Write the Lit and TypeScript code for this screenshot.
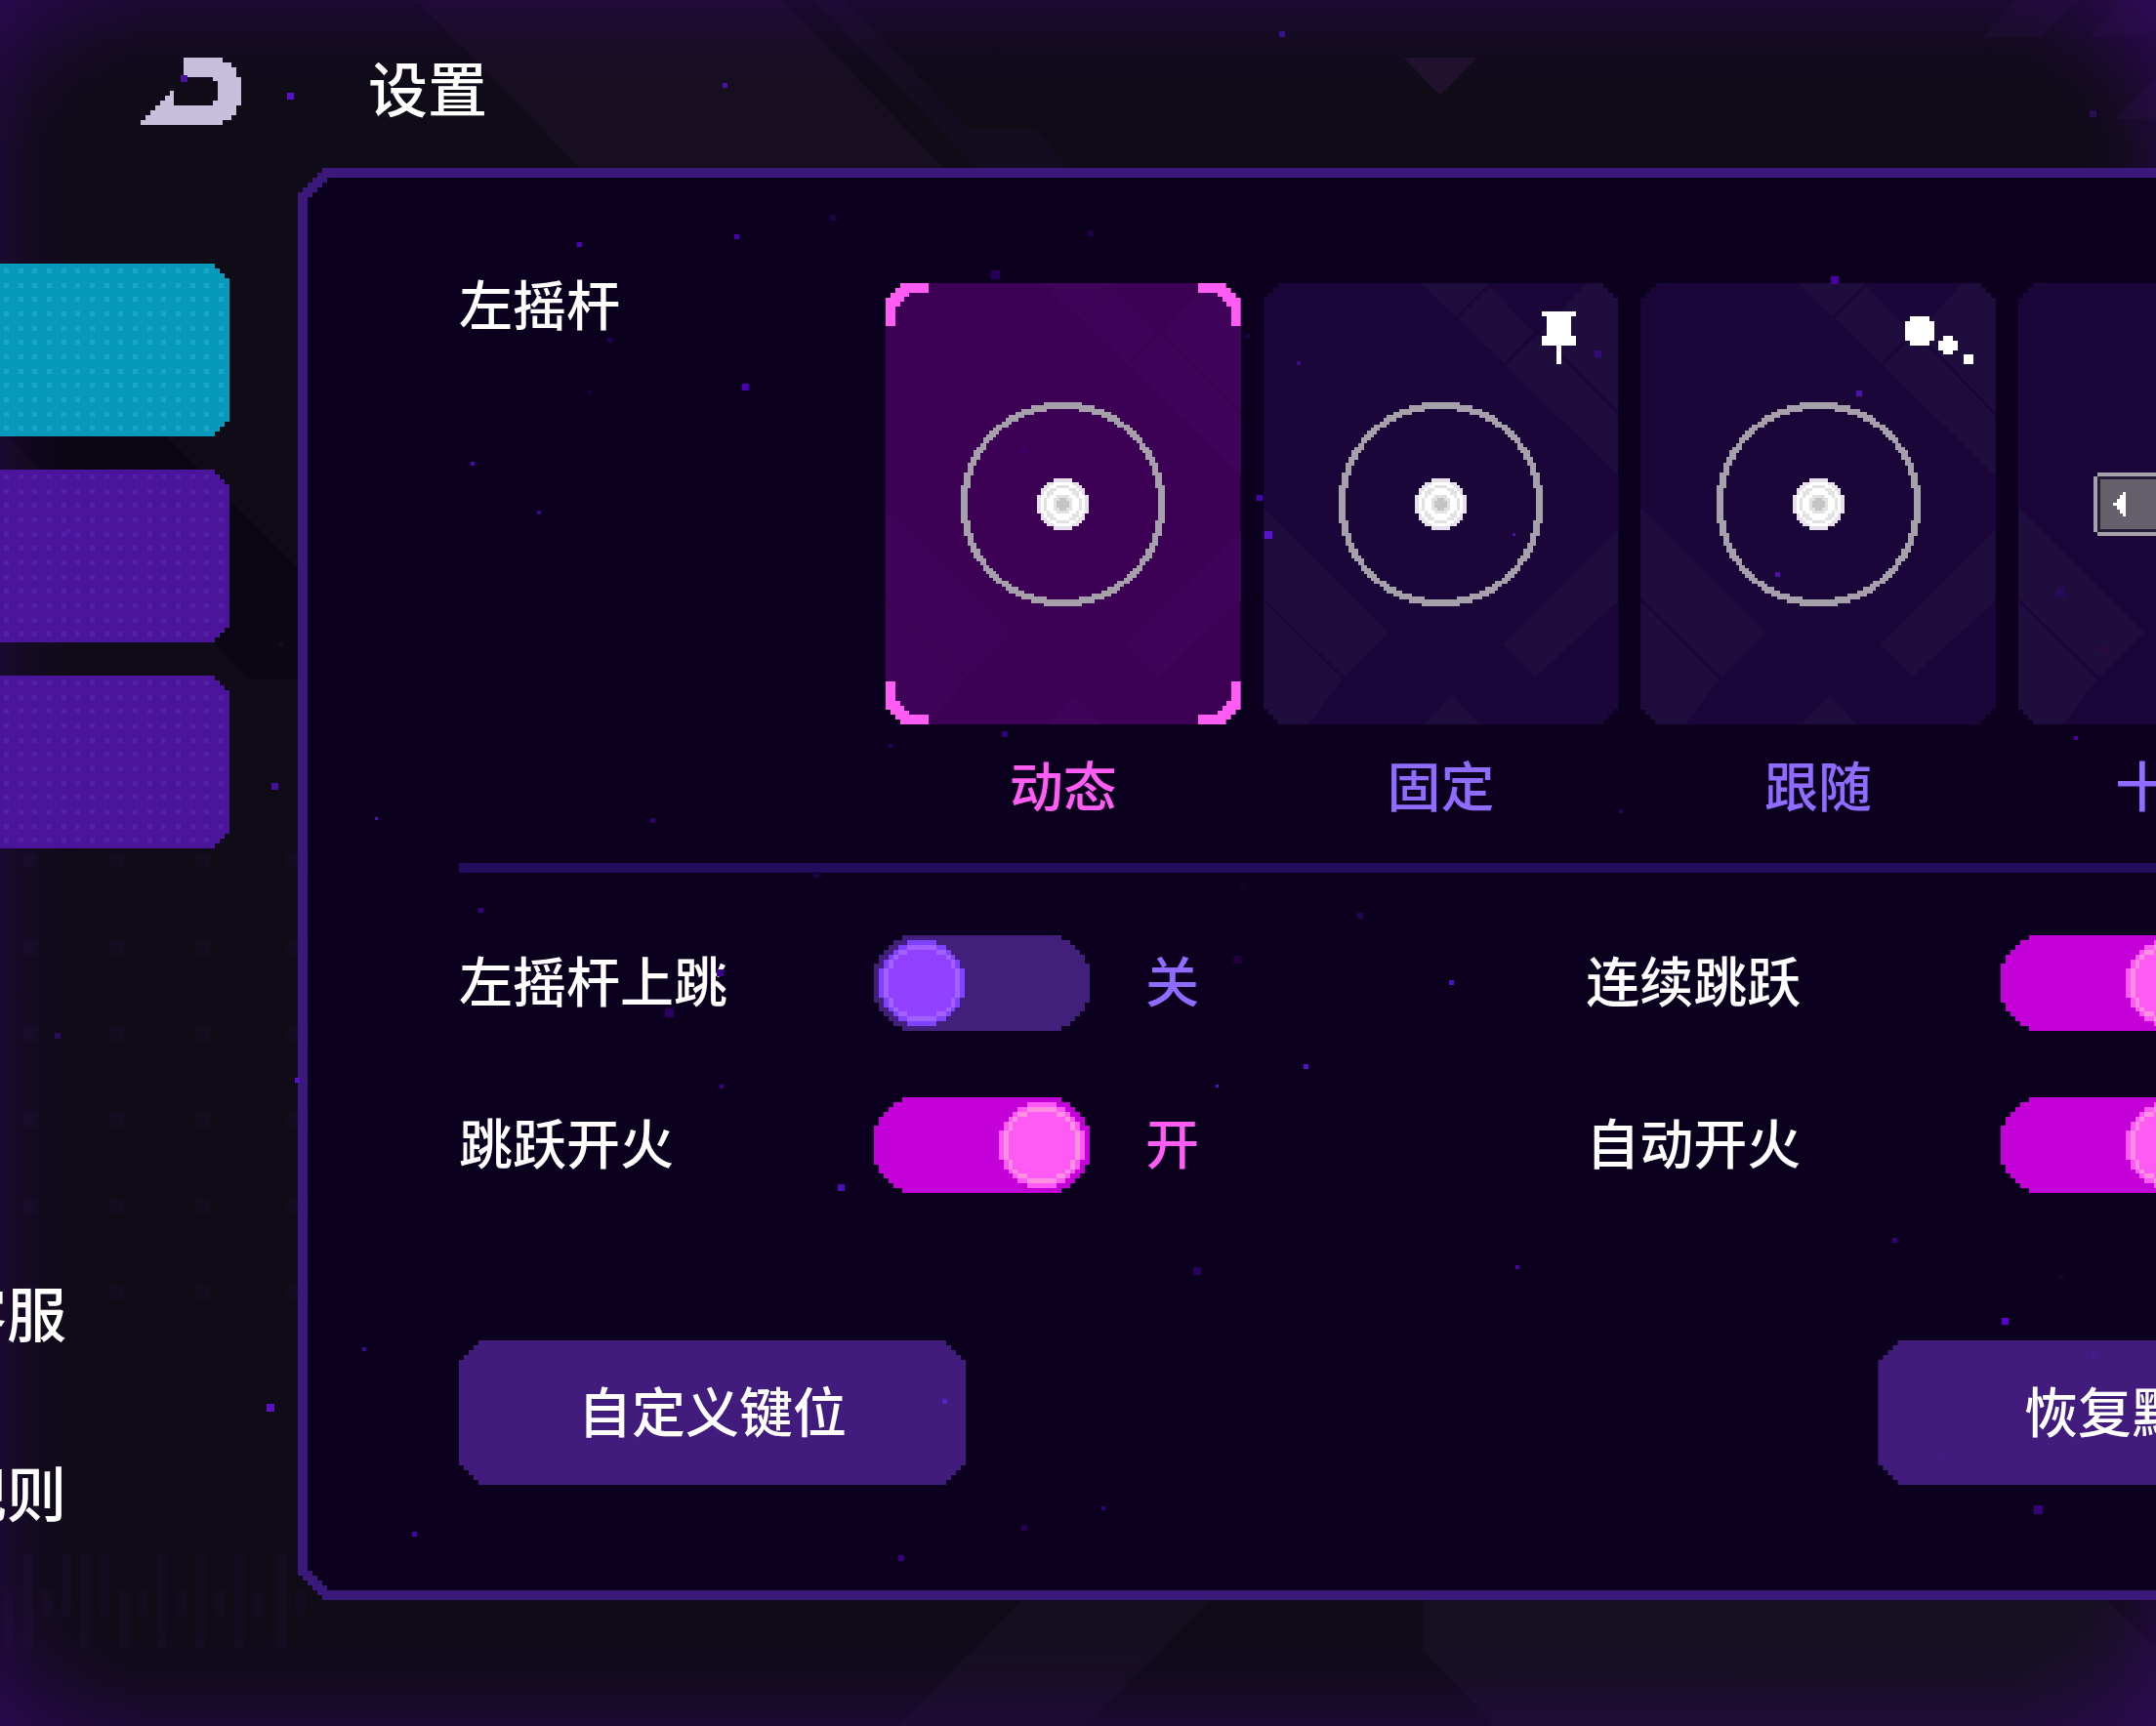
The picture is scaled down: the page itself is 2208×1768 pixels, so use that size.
import { LitElement, html, css, svg, unsafeCSS } from "lit";
import { customElement, property, state } from "lit/decorators.js";

/** Polygon with corners cut in 5px stairs. `left` keeps the left corners cut too. */
function stairs(steps: number, left = true): string {
  const s = 5;
  const c = steps * s;
  const pts: string[] = [];
  const at = (x: number, y: number, right: boolean, bottom: boolean) =>
    pts.push(`${right ? `calc(100% - ${x}px)` : `${x}px`} ${bottom ? `calc(100% - ${y}px)` : `${y}px`}`);
  const corner = (right: boolean, bottom: boolean, fromSide: boolean) => {
    const list: [number, number][] = [[0, c]];
    for (let i = 1; i <= steps; i++) {
      list.push([i * s, c - (i - 1) * s]);
      list.push([i * s, c - i * s]);
    }
    if (!fromSide) list.reverse();
    list.forEach(([x, y]) => at(x, y, right, bottom));
  };
  if (left) corner(false, false, true);
  else at(0, 0, false, false);
  corner(true, false, false);
  corner(true, true, true);
  if (left) corner(false, true, false);
  else at(0, 0, false, true);
  return `polygon(${pts.join(",")})`;
}

/** Path of a symmetric shape described by its left inset on every row. */
function rows(width: number, insets: number[], ox = 0, oy = 0): string {
  return insets.map((v, i) => `M${ox + v} ${oy + i}h${width - 2 * v}v1h${-(width - 2 * v)}z`).join("");
}

/** Path of all cells of an n×n grid whose distance from the centre is in (a, b]. */
function band(n: number, a: number, b: number): string {
  let d = "";
  for (let y = 0; y < n; y++) {
    let start = -1;
    for (let x = 0; x <= n; x++) {
      const r = Math.hypot(x + 0.5 - n / 2, y + 0.5 - n / 2);
      const hit = x < n && r > a && r <= b;
      if (hit && start < 0) start = x;
      if (!hit && start >= 0) {
        d += `M${start} ${y}h${x - start}v1h${start - x}z`;
        start = -1;
      }
    }
  }
  return d;
}

const mirror = (half: number[]) => [...half, ...[...half].reverse()];
const TRACK = rows(45, mirror([6, 4, 3, 2, 1, 1, 0, 0, 0, 0]));
const KNOB = rows(18, mirror([6, 4, 3, 2, 1, 1, 0, 0, 0]));
const KNOB_RING = rows(18, mirror([6, 4, 3, 2, 2, 1, 1, 1]), 0, 1);
const KNOB_CORE = rows(18, mirror([6, 4, 3, 3, 2, 2, 2]), 0, 2);

const STICK_RING = band(64, 30, 32.1);
const NUB = band(16, -1, 8.1);
const NUB_EDGE = band(16, 7.1, 8.1);
const NUB_RING = band(16, 4.9, 5.8);
const NUB_SOFT = band(16, 2, 3);
const NUB_CORE = band(16, -1, 2);

@customElement("pixel-switch")
export class PixelSwitch extends LitElement {
  @property() label = "";
  @property({ type: Boolean }) on = false;

  static styles = css`
    :host { display: flex; align-items: center; height: 98px; }
    .name { width: 425px; flex: none; padding-bottom: 10px; color: #fff; }
    .control { display: grid; flex: none; width: 221px; height: 98px; }
    .control > * { grid-area: 1 / 1; width: 100%; height: 100%; margin: 0; }
    .box { opacity: 0; cursor: pointer; }
    .value { margin-left: 57px; padding-bottom: 10px; color: #8f6bff; white-space: nowrap; }
    .value.on { color: #ff5cf4; }
    .track { fill: #411f7b; }
    .knob { fill: #7f43ff; }
    .ring { fill: #a261ff; }
    .core { fill: #9140ff; }
    .on .track { fill: #c400d9; }
    .on .knob { fill: #ff5af5; }
    .on .ring { fill: #ff8fe0; }
    .on .core { fill: #ff5af3; }
  `;

  render() {
    return html`
      <label class="name" for="box">${this.label}</label>
      <span class="control">
        <svg class=${this.on ? "on" : ""} viewBox="0 0 45 20" preserveAspectRatio="none" shape-rendering="crispEdges" aria-hidden="true">
          <path class="track" d=${TRACK} />
          <g transform=${`translate(${this.on ? 26 : 1} 1)`}>
            <path class="knob" d=${KNOB} />
            <path class="ring" d=${KNOB_RING} />
            <path class="core" d=${KNOB_CORE} />
          </g>
        </svg>
        <input id="box" class="box" type="checkbox" role="switch" .checked=${this.on}
          @change=${(e: Event) => { this.on = (e.target as HTMLInputElement).checked; }} />
      </span>
      <span class="value ${this.on ? "on" : ""}">${this.on ? "开" : "关"}</span>
    `;
  }
}

type Mode = { id: string; name: string };
const MODES: Mode[] = [
  { id: "dynamic", name: "动态" },
  { id: "fixed", name: "固定" },
  { id: "follow", name: "跟随" },
  { id: "cross", name: "十字键" },
];

@customElement("stick-modes")
export class StickModes extends LitElement {
  @state() private selected = "dynamic";

  static styles = css`
    :host { display: grid; grid-template-columns: repeat(4, minmax(0, 1fr)); column-gap: 23px; }
    .mode { position: relative; display: flex; flex-direction: column; gap: 36px; padding-bottom: 4px; cursor: pointer; text-align: center; color: #8f6bff; }
    .mode.active { color: #ff5cf4; }
    .pick { position: absolute; inset: 0; margin: 0; opacity: 0; }
    .card { display: grid; height: 452px; background: #1a0638; clip-path: ${unsafeCSS(stairs(3))}; }
    .card > * { grid-area: 1 / 1; }
    .active .card { background: #3c0055; }
    .pattern { width: 100%; height: 100%; fill: #1f0d3e; }
    .active .pattern { fill: #40035a; }
    .stick { width: 209px; height: 209px; place-self: center; }
    .badge { width: 70px; height: 54px; place-self: start end; margin: 29px 23px 0 0; fill: #fff; }
    .corner { width: 44px; height: 44px; fill: #ff5cf4; }
    .tl { place-self: start start; }
    .tr { place-self: start end; transform: scaleX(-1); }
    .bl { place-self: end start; transform: scaleY(-1); }
    .br { place-self: end end; transform: scale(-1); }
    .name { white-space: nowrap; }
  `;

  private art(id: string) {
    if (id === "cross") {
      return svg`
        <path fill="#a5a0a9" d="M76 0h57v4h4v68h68v4h4v57h-4v4h-68v68h-4v4h-57v-4h-4v-68h-68v-4h-4v-57h4v-4h68v-68h4z" />
        <path fill="#251c37" d="M76 4h57v72h72v57h-72v72h-57v-72h-72v-57h72z" />
        <path fill="#65606c" d="M79 7h51v72h72v51h-72v72h-51v-72h-72v-51h72z" />
        <path fill="#fff" d="M33 92v25h-3v-3h-3v-4h-3v-4h-4v-3h4v-4h3v-4h3v-3z M176 92v25h3v-3h3v-4h3v-4h4v-3h-4v-4h-3v-4h-3v-3z M92 33h25v-3h-3v-3h-4v-3h-4v-4h-3v4h-4v3h-4v3h-3z M92 176h25v3h-3v3h-4v3h-4v4h-3v-4h-4v-3h-4v-3h-3z" />`;
    }
    return svg`
      <g transform="scale(3.266)">
        <path fill="#a5a0a9" d=${STICK_RING} />
        <g transform="translate(24 24)">
          <path fill="#fff" d=${NUB} />
          <path fill="#e6e0ea" d=${NUB_EDGE} />
          <path fill="#e2e2e2" d=${NUB_RING} />
          <path fill="#e2e2e2" d=${NUB_SOFT} />
          <path fill="#c4c4c4" d=${NUB_CORE} />
        </g>
      </g>`;
  }

  private badge(id: string) {
    if (id === "fixed") {
      return html`<svg class="badge" viewBox="0 0 70 54" aria-hidden="true">
        <path d="M15 0h35v5h-5v20h5v10h-15v19h-5v-19h-15v-10h5v-20h-5z" />
      </svg>`;
    }
    if (id === "follow") {
      return html`<svg class="badge" viewBox="0 0 70 54" aria-hidden="true">
        <path d="M5 5h20v5h5v20h-5v5h-20v-5h-5v-20h5z M39 25h10v5h5v10h-5v4h-10v-4h-5v-10h5z M60 44h10v10h-10z" />
      </svg>`;
    }
    return null;
  }

  private corners() {
    return ["tl", "tr", "bl", "br"].map(
      (c) => html`<svg class="corner ${c}" viewBox="0 0 44 44" shape-rendering="crispEdges" aria-hidden="true">
        <path d="M15 0H44V10H24V14H19V19H15V24H10V44H0V14H5V10H10V5H15Z" />
      </svg>`,
    );
  }

  render() {
    return MODES.map((m) => {
      const active = m.id === this.selected;
      return html`<label class="mode ${active ? "active" : ""}">
        <input class="pick" type="radio" name="stick" .checked=${active} @change=${() => { this.selected = m.id; }} />
        <span class="card">
          <svg class="pattern" viewBox="0 0 363 452" preserveAspectRatio="none" shape-rendering="crispEdges" aria-hidden="true">
            <path d="M161 0H230L196 34Z M231 4L276 50L246 82L199 36Z M284 50L330 0H363V132Z M281 53L363 136V198L248 84Z
              M0 230L128 358L83 403L0 323Z M0 326L80 406L46 452H0Z M363 253L245 370L278 403L363 325Z M193 422L221 452H165Z" />
          </svg>
          <svg class="stick" viewBox="0 0 209 209" shape-rendering="crispEdges" aria-hidden="true">${this.art(m.id)}</svg>
          ${this.badge(m.id)} ${active ? this.corners() : null}
        </span>
        <span class="name">${m.name}</span>
      </label>`;
    });
  }
}

const GRID_X = [24, 112, 200, 294];
const GRID_Y = [874, 963, 1051, 1139, 1228, 1316];

/** x, top, bottom of the equaliser bars under the left rail. */
const BARS: [number, number, number][] = [
  [4, 1630, 1689], [24, 1591, 1689], [43, 1630, 1655], [63, 1591, 1655], [82, 1591, 1689], [102, 1591, 1655],
  [122, 1630, 1689], [141, 1630, 1655], [161, 1591, 1689], [181, 1630, 1655], [200, 1591, 1689], [220, 1630, 1655],
  [240, 1591, 1689], [259, 1630, 1655], [284, 1591, 1689], [303, 1630, 1655],
];

/** x, y, size, colour of the drifting particles. */
const SPARKS: [number, number, number, string][] = [
  [185, 77, 7, "#4a129c"], [294, 95, 7, "#5a10c8"], [591, 248, 5, "#4a00b8"], [622, 346, 5, "#260057"],
  [602, 400, 4, "#1a0040"], [482, 473, 4, "#4a08a8"], [550, 523, 4, "#3a0888"], [740, 85, 5, "#4a12a0"],
  [68, 542, 4, "#5518b5"], [278, 802, 7, "#45109c"], [384, 837, 3, "#5010c0"], [666, 838, 5, "#300070"],
  [490, 930, 5, "#360080"], [56, 1058, 6, "#2a0c5c"], [302, 1104, 5, "#5a10cc"], [681, 1033, 9, "#2a0060"],
  [734, 993, 7, "#3c0090"], [737, 1111, 4, "#3a0090"], [285, 657, 5, "#1a0820"], [262, 1145, 5, "#1a0820"],
  [371, 1380, 4, "#3a0888"], [273, 1438, 8, "#5a10c8"], [422, 1569, 5, "#4a00a8"], [752, 240, 5, "#4a00b0"],
  [850, 220, 6, "#1e0045"], [1114, 236, 6, "#1e0045"], [1015, 277, 9, "#26005a"], [1310, 32, 6, "#38108a"],
  [760, 393, 7, "#4a00b8"], [1275, 342, 5, "#1c0040"], [1328, 370, 4, "#3a0888"], [1046, 460, 5, "#400066"],
  [1287, 507, 6, "#4a00b8"], [1295, 544, 8, "#5a10d0"], [2140, 113, 7, "#280e55"], [1875, 283, 8, "#4a00a0"],
  [1633, 359, 7, "#360a78"], [1901, 400, 6, "#4a10b0"], [1549, 546, 3, "#4a10a8"], [1818, 586, 5, "#4a10a8"],
  [1026, 749, 6, "#300070"], [910, 762, 4, "#26005a"], [833, 893, 6, "#1e0045"], [1270, 906, 6, "#150028"],
  [1390, 935, 6, "#26005a"], [1263, 979, 8, "#220040"], [1335, 1090, 5, "#5a10c8"], [1245, 1111, 3, "#5a10c8"],
  [858, 1213, 7, "#4a10b8"], [2106, 603, 8, "#2a0a60"], [2151, 662, 7, "#2a0840"], [2124, 754, 4, "#4a00a0"],
  [1658, 829, 4, "#26005a"], [1484, 1004, 5, "#4a10c8"], [1222, 1298, 8, "#26005a"], [1552, 1296, 4, "#4a00a0"],
  [1938, 1268, 5, "#36007a"], [2109, 1306, 5, "#180028"], [2050, 1350, 7, "#5a00d0"], [965, 1433, 5, "#5a20c8"],
  [2142, 1386, 6, "#4a1a90"], [1987, 1490, 6, "#431a88"], [1128, 1543, 4, "#36007a"], [1046, 1562, 6, "#26004a"],
  [920, 1593, 6, "#36007a"], [2083, 1542, 9, "#36007a"],
];

const TABS = [
  { name: "操作", active: true },
  { name: "画面", active: false },
  { name: "声音", active: false },
];

@customElement("app-root")
export class AppRoot extends LitElement {
  static styles = css`
    :host {
      display: block;
      position: relative;
      min-height: 100vh;
      overflow: hidden;
      background: #0f0b17;
      color: #fff;
      font: 500 55px/48px "Noto Sans CJK SC", "Liberation Sans", sans-serif;
    }
    .layer { position: absolute; inset: 0; width: 100%; height: 100%; pointer-events: none; }
    .glow {
      background:
        linear-gradient(90deg, rgba(44, 8, 84, 0.4), rgba(40, 8, 80, 0.12) 40px, transparent 84px),
        linear-gradient(270deg, rgba(50, 8, 92, 0.4), rgba(50, 8, 90, 0.12) 40px, transparent 84px),
        linear-gradient(180deg, rgba(44, 8, 84, 0.45), rgba(40, 8, 80, 0.15) 50px, transparent 94px),
        linear-gradient(0deg, rgba(44, 8, 84, 0.45), rgba(40, 8, 80, 0.15) 50px, transparent 94px);
    }
    .corners {
      background:
        radial-gradient(circle at 0 0, rgba(60, 8, 115, 0.25), transparent 150px),
        radial-gradient(circle at 100% 0, rgba(60, 8, 115, 0.3), transparent 150px),
        radial-gradient(circle at 0 100%, rgba(60, 8, 115, 0.25), transparent 150px),
        radial-gradient(circle at 100% 100%, rgba(60, 8, 115, 0.25), transparent 150px);
    }
    .stage {
      position: relative;
      display: grid;
      grid-template-columns: 305px minmax(0, 1fr);
      grid-template-rows: 172px auto;
      width: 118%;
    }
    .header { grid-column: 1 / -1; display: flex; align-items: center; gap: 130px; padding: 15px 0 0 144px; }
    .back { display: flex; width: 103px; padding: 0; border: 0; background: none; cursor: pointer; }
    .back svg { width: 103px; height: 69px; fill: #c7bfdb; }
    .title { margin: 0; padding-bottom: 10px; font-size: 61px; font-weight: 500; line-height: 62px; }
    .rail { display: flex; flex-direction: column; padding-top: 98px; }
    .tabs { display: flex; flex-direction: column; gap: 34px; margin-bottom: 444px; }
    .tab {
      display: block;
      width: 235px;
      height: 177px;
      padding: 0;
      border: 0;
      background: #4a159a;
      fill: #5420ab;
      clip-path: ${unsafeCSS(stairs(3, false))};
      cursor: pointer;
    }
    .tab.active { background: #0799bb; fill: #18a6c9; }
    .tab svg { display: block; width: 100%; height: 100%; }
    .links { display: flex; flex-direction: column; gap: 122px; width: 68px; }
    .link { display: flex; justify-content: flex-end; color: #fff; font-size: 61px; line-height: 62px; white-space: nowrap; text-decoration: none; }
    .panel { padding: 10px; background: #3b197a; clip-path: ${unsafeCSS(stairs(5))}; }
    .inner { padding: 108px 153px 108px 155px; background: #0b001e; clip-path: ${unsafeCSS(stairs(4))}; }
    .sticks { display: grid; grid-template-columns: 437px minmax(0, 1fr); padding-right: 12px; }
    .heading { line-height: 38px; }
    .rule { height: 10px; margin: 54px 0 64px; border: 0; background: #220d5c; }
    .switches { display: grid; grid-template-columns: 1154fr 818fr; row-gap: 68px; margin-bottom: 151px; }
    .actions { display: flex; justify-content: space-between; }
    .action {
      width: 519px;
      height: 148px;
      padding: 0 0 8px;
      border: 0;
      background: #411c7c;
      color: #fff;
      font: inherit;
      clip-path: ${unsafeCSS(stairs(4))};
      cursor: pointer;
    }
  `;

  private tabDots(id: string) {
    const offsets = [0, 15, 29];
    return html`<svg aria-hidden="true">
      <defs>
        <pattern id=${id} x="4" y="5" width="44" height="44" patternUnits="userSpaceOnUse">
          ${offsets.map((y) => offsets.map((x) => svg`<rect x=${x} y=${y} width="5" height="5" />`))}
        </pattern>
      </defs>
      <rect width="100%" height="100%" fill=${`url(#${id})`} />
    </svg>`;
  }

  render() {
    return html`
      <svg class="layer" viewBox="0 0 2208 1768" preserveAspectRatio="xMinYMin slice" shape-rendering="crispEdges" aria-hidden="true">
        <path fill="#170e20" d="M427 0H801L966 172H594Z" />
        <path fill="#140d1f" d="M834 0H864L992 132H1060L1095 172H1000Z" />
        <path fill="#20122b" d="M1438 59H1512L1475 98Z" />
        <path fill="#170e22" d="M2065 0H2125L2090 38H2031Z M2172 0H2208V28L2200 38H2140Z M2208 80V122H2165Z" />
        <path fill="#0b0613" d="M9 447H170L305 582V696H256Z" />
        ${GRID_Y.map((y) => GRID_X.map((x) => svg`<rect fill="#120e20" x=${x} y=${y} width="15" height="15" />`))}
        ${BARS.map(([x, a, b]) => svg`<rect fill="#140d1f" x=${x} y=${a} width="10" height=${b - a} />`)}
        <path fill="#140e1f" d="M1046 1639H1239L1111 1768H920Z" />
        <path fill="#151020" d="M1458 1639H2158L2208 1690V1768H1531L1458 1691Z" />
      </svg>
      <div class="layer glow"></div>
      <div class="layer corners"></div>

      <div class="stage">
        <header class="header">
          <button class="back" aria-label="返回">
            <svg viewBox="0 0 103 69" shape-rendering="crispEdges" aria-hidden="true">
              <path d="M44 0H84V5H93V10H98V20H103V49H98V59H93V64H84V69H0V64H5V59H10V54H15V49H20V44H25V39H30V34H34V49H74V44H79V24H74V20H44Z" />
            </svg>
          </button>
          <h1 class="title">设置</h1>
        </header>

        <nav class="rail">
          <div class="tabs">
            ${TABS.map((t, i) => html`<button class="tab ${t.active ? "active" : ""}" aria-label=${t.name}>${this.tabDots(`dots${i}`)}</button>`)}
          </div>
          <div class="links">
            <a class="link" href="#service">客服</a>
            <a class="link" href="#rules">规则</a>
          </div>
        </nav>

        <main class="panel">
          <div class="inner">
            <div class="sticks">
              <span class="heading">左摇杆</span>
              <stick-modes role="radiogroup" aria-label="左摇杆"></stick-modes>
            </div>
            <hr class="rule" />
            <div class="switches">
              <pixel-switch label="左摇杆上跳"></pixel-switch>
              <pixel-switch label="连续跳跃" on></pixel-switch>
              <pixel-switch label="跳跃开火" on></pixel-switch>
              <pixel-switch label="自动开火" on></pixel-switch>
            </div>
            <div class="actions">
              <button class="action">自定义键位</button>
              <button class="action">恢复默认</button>
            </div>
          </div>
        </main>
      </div>

      <svg class="layer" viewBox="0 0 2208 1768" preserveAspectRatio="xMinYMin slice" shape-rendering="crispEdges" aria-hidden="true">
        ${SPARKS.map(([x, y, s, c]) => svg`<rect x=${x} y=${y} width=${s} height=${s} fill=${c} />`)}
      </svg>
    `;
  }
}
